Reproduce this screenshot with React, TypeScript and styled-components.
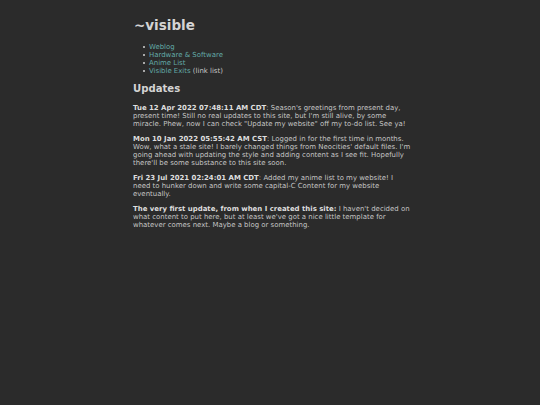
import React from 'react';
import styled, { createGlobalStyle } from 'styled-components';

// 원본 페이지를 540px 창에 맞게 축소한 값 (약 0.42배)
const GlobalStyle = createGlobalStyle`
  html, body {
    margin: 0;
    padding: 0;
    background: #2b2b2b;
  }
  body {
    font-family: "DejaVu Sans", Verdana, sans-serif;
    font-size: 6.95px;
    color: #c4c4c4;
    min-height: 405px;
  }
`;

const Page = styled.main`
  width: 279px;
  margin-left: 133px;
  padding-top: 9px;
`;

const Title = styled.h1`
  font-size: 13.5px;
  font-weight: bold;
  color: #d4d4d4;
  margin: 8px 0 10px 1px;
`;

const NavList = styled.ul`
  margin: 8px 0 7px;
  padding-left: 16px;
  list-style: none;
`;

// 작은 네모 글머리표
const NavItem = styled.li`
  line-height: 8px;

  &::before {
    content: '';
    display: inline-block;
    width: 2px;
    height: 2px;
    background: #a8a8a8;
    margin: 0 4px 1px -6px;
    vertical-align: middle;
  }
`;

const Link = styled.a`
  color: #62a9a6;
  text-decoration: none;
`;

const Heading = styled.h2`
  font-size: 10.1px;
  font-weight: bold;
  color: #d4d4d4;
  margin: 8px 0 10px;
`;

const Update = styled.p`
  margin: 7px 0;
  line-height: 8px;
`;

const Stamp = styled.b`
  color: #dedede;
`;

const updates = [
  {
    stamp: 'Tue 12 Apr 2022 07:48:11 AM CDT',
    sep: ': ',
    text: 'Season\'s greetings from present day, present time! Still no real updates to this site, but I\'m still alive, by some miracle. Phew, now I can check "Update my website" off my to-do list. See ya!',
  },
  {
    stamp: 'Mon 10 Jan 2022 05:55:42 AM CST',
    sep: ': ',
    text: 'Logged in for the first time in months. Wow, what a stale site! I barely changed things from Neocities\' default files. I\'m going ahead with updating the style and adding content as I see fit. Hopefully there\'ll be some substance to this site soon.',
  },
  {
    stamp: 'Fri 23 Jul 2021 02:24:01 AM CDT',
    sep: ': ',
    text: 'Added my anime list to my website! I need to hunker down and write some capital-C Content for my website eventually.',
  },
  {
    stamp: 'The very first update, from when I created this site:',
    sep: ' ',
    text: 'I haven\'t decided on what content to put here, but at least we\'ve got a nice little template for whatever comes next. Maybe a blog or something.',
  },
];

export default function App() {
  return (
    <>
      <GlobalStyle />
      <Page>
        <Title>~visible</Title>
        <NavList>
          <NavItem><Link href="#">Weblog</Link></NavItem>
          <NavItem><Link href="#">Hardware &amp; Software</Link></NavItem>
          <NavItem><Link href="#">Anime List</Link></NavItem>
          <NavItem><Link href="#">Visible Exits</Link> (link list)</NavItem>
        </NavList>
        <Heading>Updates</Heading>
        {updates.map((u) => (
          <Update key={u.stamp}>
            <Stamp>{u.stamp}</Stamp>{u.sep}{u.text}
          </Update>
        ))}
      </Page>
    </>
  );
}
